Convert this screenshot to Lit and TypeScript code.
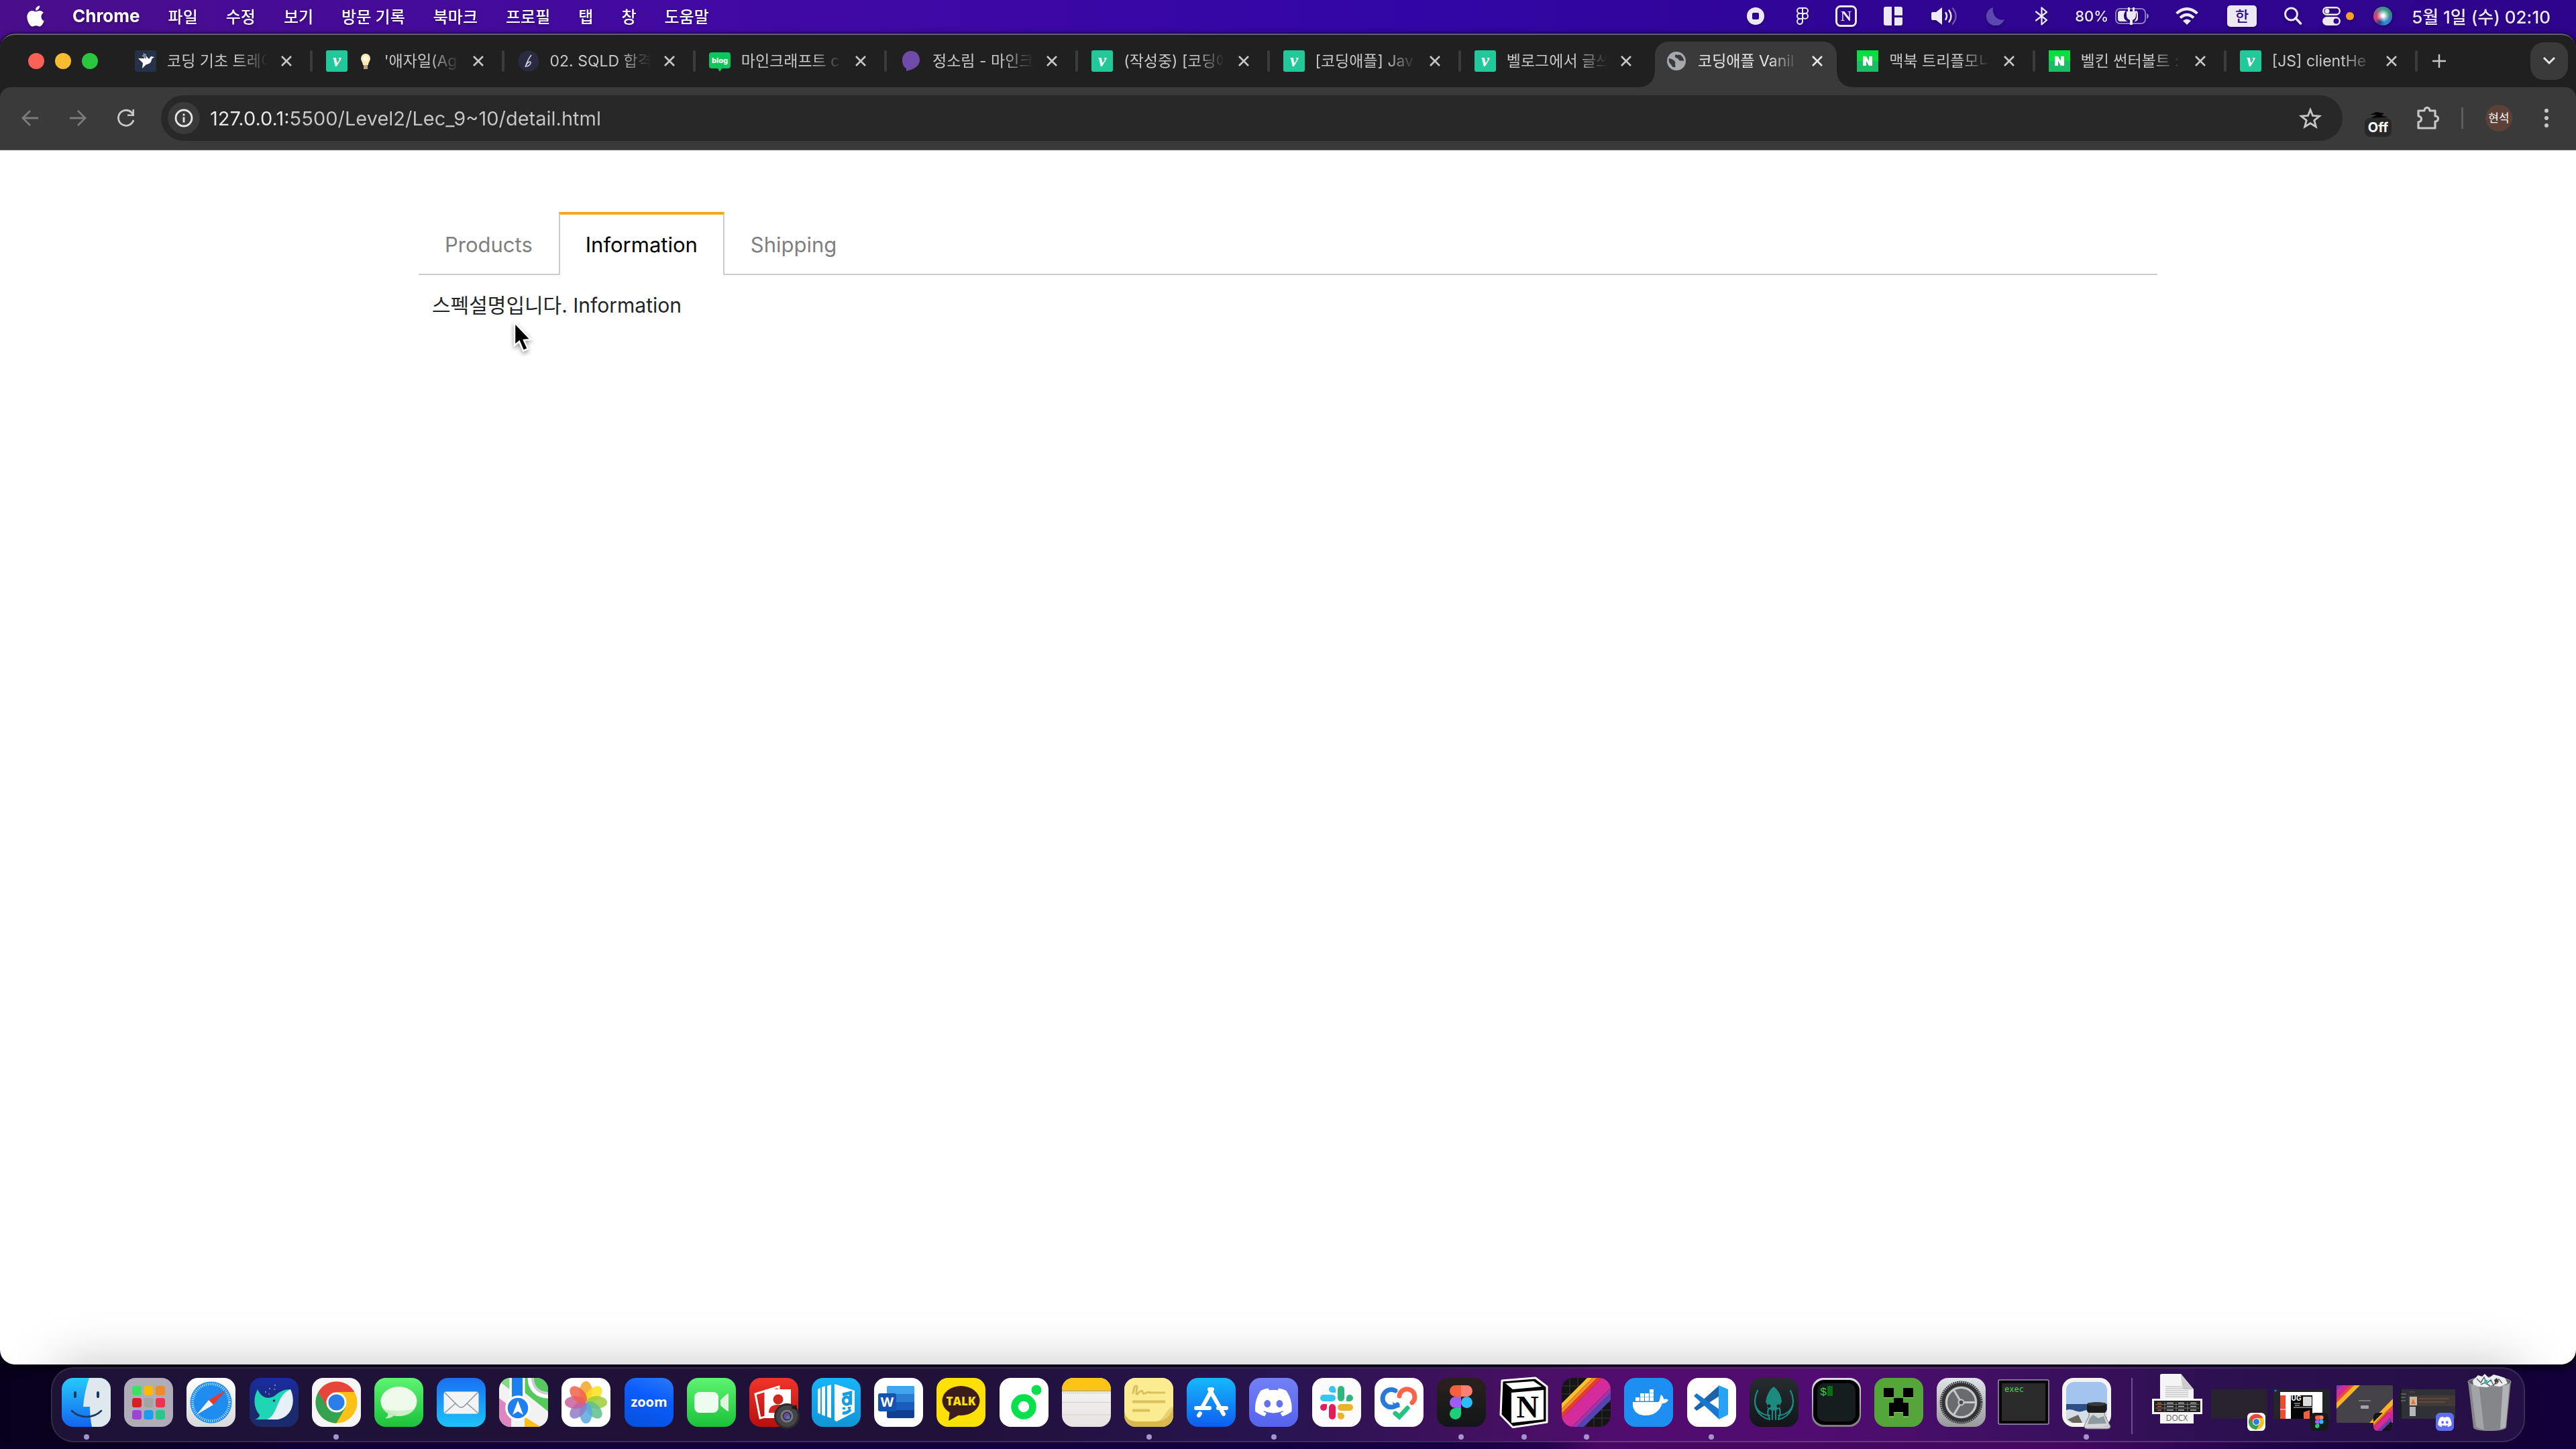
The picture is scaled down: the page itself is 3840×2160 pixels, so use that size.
import { LitElement, html, svg, css } from "lit";
import { customElement, state } from "lit/decorators.js";
import { classMap } from "lit/directives/class-map.js";

/* ---------- shared marks, all drawn on a 73 x 73 tile ---------- */

const chromeMark = svg`
  <circle cx="36.5" cy="36.5" r="31" fill="#fbc116"/>
  <path d="M36.5 36.5 9.6 21A31 31 0 0 1 63.4 21H36.5z" fill="#e8453a"/>
  <path d="M9.6 21A31 31 0 0 0 36.5 67.5L50 44 36.5 36.5 22 41z" fill="#34a350"/>
  <path d="M9.6 21 23 44 36.5 36.5V21z" fill="#e8453a"/>
  <circle cx="36.5" cy="36.5" r="15" fill="#fff"/>
  <circle cx="36.5" cy="36.5" r="12" fill="#2b7de9"/>`;

const figmaMark = svg`
  <path d="M36 11h-8.500a8.500 8.500 0 0 0 0 17H36z" fill="#f7603f"/>
  <path d="M36 11h8.500a8.500 8.500 0 0 1 0 17H36z" fill="#fb8072"/>
  <path d="M36 28h-8.500a8.500 8.500 0 0 0 0 17H36z" fill="#a25bf5"/>
  <circle cx="44.500" cy="36.500" r="8.500" fill="#2cbcfb"/>
  <path d="M36 45h-8.500a8.500 8.500 0 1 0 8.500 8.500z" fill="#1ccf76"/>`;

const discordMark = svg`
  <g transform="translate(9 9) scale(2.28)"><path fill="#fff" d="M20.317 4.3698a19.7913 19.7913 0 00-4.8851-1.5152.0741.0741 0 00-.0785.0371c-.211.3753-.4447.8648-.6083 1.2495-1.8447-.2762-3.68-.2762-5.4868 0-.1636-.3933-.4058-.8742-.6177-1.2495a.077.077 0 00-.0785-.037 19.7363 19.7363 0 00-4.8852 1.515.0699.0699 0 00-.0321.0277C.5334 9.0458-.319 13.5799.0992 18.0578a.0824.0824 0 00.0312.0561c2.0528 1.5076 4.0413 2.4228 5.9929 3.0294a.0777.0777 0 00.0842-.0276c.4616-.6304.8731-1.2952 1.226-1.9942a.076.076 0 00-.0416-.1057c-.6528-.2476-1.2743-.5495-1.8722-.8923a.077.077 0 01-.0076-.1277c.1258-.0943.2517-.1923.3718-.2914a.0743.0743 0 01.0776-.0105c3.9278 1.7933 8.18 1.7933 12.0614 0a.0739.0739 0 01.0785.0095c.1202.099.246.1981.3728.2924a.077.077 0 01-.0066.1276 12.2986 12.2986 0 01-1.873.8914.0766.0766 0 00-.0407.1067c.3604.698.7719 1.3628 1.225 1.9932a.076.076 0 00.0842.0286c1.961-.6067 3.9495-1.5219 6.0023-3.0294a.077.077 0 00.0313-.0552c.5004-5.177-.8382-9.6739-3.5485-13.6604a.061.061 0 00-.0312-.0286zM8.02 15.3312c-1.1825 0-2.1569-1.0857-2.1569-2.419 0-1.3332.9555-2.4189 2.157-2.4189 1.2108 0 2.1757 1.0952 2.1568 2.419 0 1.3332-.9555 2.4189-2.1569 2.4189zm7.9748 0c-1.1825 0-2.1569-1.0857-2.1569-2.419 0-1.3332.9554-2.4189 2.1569-2.4189 1.2108 0 2.1757 1.0952 2.1568 2.419 0 1.3332-.946 2.4189-2.1568 2.4189Z"/></g>`;

const band = (a: number, b: number, fill: string) =>
  svg`<path d="M${a} 0H${b}L0 ${b}V${a}z" fill=${fill}/>`;

const stripesMark = svg`
  <path d="M0 12h73M0 24h73M0 36h73M0 48h73M0 60h73M12 0v73M24 0v73M36 0v73M48 0v73M60 0v73" stroke="#3a3a3a"/>
  ${band(38, 46, "#fbc02c")}${band(46, 53, "#f58a2a")}${band(53, 60, "#ee3a2e")}
  ${band(60, 88, "#d42c9c")}${band(88, 96, "#9a36ac")}${band(96, 106, "#5145b5")}`;

/* ---------- dock applications ---------- */

interface DockApp {
  id: string;
  label: string;
  running?: boolean;
  art: unknown;
}

const petals = [
  [0, "#f5a623"], [45, "#f8e01c"], [90, "#9ccc3c"], [135, "#5fbf8c"],
  [180, "#5aa9e0"], [225, "#8f7cc8"], [270, "#c9609c"], [315, "#f0604c"],
] as const;

const launchColors = ["#3fdf62", "#fab70f", "#f0892a", "#d42020", "#a3a3a3", "#ee3350", "#9a45d6", "#1b9cf2", "#2cc58a"];

const apps: DockApp[] = [
  { id: "finder", label: "Finder", running: true, art: svg`
    <path d="M41 0C36 14 33 28 32 43H42C42 54 43 64 45 73H73V0z" fill="#dfe7ef"/>
    <path d="M20 22v6M54 22v6" stroke="#173a5e" stroke-width="4" stroke-linecap="round"/>
    <path d="M15 49C27 61 47 61 59 49" fill="none" stroke="#173a5e" stroke-width="2.500" stroke-linecap="round"/>` },
  { id: "launchpad", label: "Launchpad", art: launchColors.map((c, i) =>
      svg`<rect x=${12 + (i % 3) * 17.5} y=${12 + Math.floor(i / 3) * 18} width="14" height="14" rx="3.500" fill=${c}/>`) },
  { id: "safari", label: "Safari", art: svg`
    <circle cx="36.500" cy="36.500" r="31" fill="#1e8cf0"/>
    <circle cx="36.500" cy="36.500" r="27.500" fill="none" stroke="#cfe8ff" stroke-width="4" stroke-dasharray="1 1.900"/>
    <path d="M59 18 33 33 40 40z" fill="#e8392f"/><path d="M15 55 33 33 40 40z" fill="#f2f4f6"/>` },
  { id: "whale", label: "Whale", art: svg`
    <path d="M12 17C18 31 28 32 37 27 45 20 52 17 61 17C57 34 55 50 34 62H8C14 60 15 57 15 55C6 45 5 30 12 17z" fill="#1fd6b4"/>
    <path d="M61 17C69 33 65 58 42 62H26C44 54 39 26 61 17z" fill="#e6f0f7"/>
    <circle cx="36.500" cy="34" r="1.800" fill="#12304e"/>
    <g fill="#fff"><circle cx="24" cy="21" r=".8"/><circle cx="30" cy="16" r=".8"/><circle cx="38" cy="11" r=".8"/><circle cx="37" cy="17" r=".7"/><circle cx="29" cy="24" r=".7"/></g>` },
  { id: "chrome", label: "Chrome", running: true, art: chromeMark },
  { id: "messages", label: "메시지", art: svg`
    <ellipse cx="36.500" cy="35" rx="27" ry="22" fill="#eefbea"/><path d="M19 49C22 55 20 58 16 60 23 61 28 58 31 54z" fill="#c8efc4"/>
    <path d="M12 45C20 61 53 61 61 45 54 50 20 50 12 45z" fill="#bdeab8" opacity=".7"/>` },
  { id: "mail", label: "Mail", art: svg`
    <rect x="10.500" y="20.500" width="52" height="33" rx="4" fill="#f1f3f5"/>
    <path d="M12 22 32 42Q36.500 46 41 42L61 22M12 52 28 38M61 52 45 38" fill="none" stroke="#8f969e" stroke-width="1.600"/>` },
  { id: "maps", label: "지도", art: svg`
    <path d="M0 0h17v18L0 5z" fill="#7edb7e"/><path d="M38 0h35v50L38 22z" fill="#56c95c"/>
    <path d="M0 30 18 44V73H0z" fill="#dd86bf"/><path d="M38 58 62 73H38z" fill="#f8c21c"/>
    <rect x="19" y="0" width="16" height="45" fill="#1d7ff0"/><path d="M17 0v44M37 0v44" stroke="#fff" stroke-width="3"/>
    <path d="M47 0C47 16 58 26 73 26" fill="none" stroke="#fff" stroke-width="9"/><path d="M50 0C50 14 60 23 73 23" fill="none" stroke="#c9ccd1" stroke-width="4"/>
    <circle cx="28" cy="45" r="17" fill="#1d7ff0" stroke="#fff" stroke-width="3.500"/>
    <path d="M28 34 36 55 28 50 20 55z" fill="#fff"/>` },
  { id: "photos", label: "사진", art: petals.map(([a, c]) =>
      svg`<ellipse cx="36.500" cy="20.500" rx="9.500" ry="15.500" fill=${c} opacity=".85" transform="rotate(${a} 36.5 36.5)"/>`) },
  { id: "zoom", label: "Zoom", art: svg`<text x="36.500" y="42.500" class="zoomtext">zoom</text>` },
  { id: "facetime", label: "FaceTime", art: svg`
    <rect x="11" y="21" width="36" height="31" rx="8" fill="#eefbef"/><path d="M50 33Q60 23 62 23V50Q60 50 50 41z" fill="#dff5e0"/>` },
  { id: "photobooth", label: "Photo Booth", art: svg`
    <path d="M9 24 44 13V20H24V58L16 60z" fill="none" stroke="#fff" stroke-width="3"/>
    <rect x="24" y="17" width="38" height="43" fill="#fff"/>
    <circle cx="43" cy="32" r="7.500" fill="#d62420"/><path d="M29 52C29 42 36 40 43 40S57 42 57 52z" fill="#d62420"/>
    <circle cx="56" cy="57" r="19" fill="#2b2b2d"/><circle cx="56" cy="57" r="16" fill="#454548"/><circle cx="56" cy="57" r="8" fill="#2a2a36" stroke="#77777d" stroke-width="3"/>
    <circle cx="56" cy="57" r="5" fill="#6a4b9e"/><circle cx="58" cy="59" r="2.500" fill="#3a86b0"/><path d="M62 45 70 40 71 48z" fill="#1a1a1a"/>` },
  { id: "bandi", label: "반디집", art: svg`
    <g fill="#fff"><path d="M9 17l4-2v39l-4-2zM15 14l5-2v45l-5-2zM23 12l6-2v50l-6-2zM34 9l30 10v32L37 65 34 63z"/></g>
    <g fill="none" stroke="#149fe2" stroke-width="4.500"><ellipse cx="52" cy="34" rx="5" ry="5.500"/><path d="M46 25 58 22V40M48 44v3M56 43v3M46 52Q52 54 58 47"/></g>` },
  { id: "word", label: "Word", art: svg`
    <rect x="19" y="12" width="41" height="48" rx="3" fill="#1a5cbe"/><path d="M19 24V15q0-3 3-3H57q3 0 3 3v9z" fill="#41a5ee"/>
    <rect x="19" y="24" width="41" height="12" fill="#2b7cd3"/><path d="M19 48h41v9q0 3-3 3H22q-3 0-3-3z" fill="#103f91"/>
    <rect x="6" y="23" width="27" height="27" rx="3" fill="#1553b0"/><text x="19.500" y="43" class="wordtext">W</text>` },
  { id: "talk", label: "카카오톡", art: svg`
    <ellipse cx="36.500" cy="34" rx="28" ry="22" fill="#3b1d1c"/><path d="M20 48 18 64 36 54z" fill="#3b1d1c"/>
    <text x="36.500" y="41" class="talktext">TALK</text>` },
  { id: "cookie", label: "Cookie", art: svg`
    <circle cx="36" cy="43" r="13.500" fill="none" stroke="#06e04a" stroke-width="10.500"/><circle cx="55" cy="18" r="7.500" fill="#06e04a"/>` },
  { id: "notes", label: "메모", art: svg`
    <rect width="73" height="19" fill="#fbc417"/><path d="M0 19.500h73" stroke="#b8a878" stroke-width="1.500"/><path d="M2 22.500h70" stroke="#bbb" stroke-width="1.500" stroke-dasharray="1.500 1.500"/>
    <path d="M0 36.500h73M0 55h73" stroke="#cfcdcb" stroke-width="1.200"/>` },
  { id: "stickies", label: "스티커", running: true, art: svg`
    <path d="M0 50C10 70 60 70 73 44V73H0z" fill="#d9b94c"/><path d="M0 0H73V42C68 58 58 65 44 65H20C8 65 2 60 0 50z" fill="#fbec92"/>
    <path d="M46 65C62 62 58 50 73 42 70 58 60 65 46 65z" fill="#e8d170"/>
    <path d="M13 24C14 14 16 10 19 13 18 20 17 26 20 24 24 18 27 18 28 23 32 25 34 19 38 22H61" fill="none" stroke="#dcc05c" stroke-width="3"/>
    <path d="M12 35.500h49M12 48.500h26" stroke="#dcc05c" stroke-width="4"/>` },
  { id: "appstore", label: "App Store", art: svg`
    <g stroke="#fff" stroke-width="6" stroke-linecap="round"><path d="M38 17 23 44M34 17 55 54M14 45H34M47 45h12M20 53l-2 3"/></g>` },
  { id: "discord", label: "Discord", running: true, art: discordMark },
  { id: "slack", label: "Slack", art: svg`
    <g stroke-width="10" stroke-linecap="round"><path d="M17 30H30" stroke="#36c5f0"/><path d="M43 17V30" stroke="#2eb67d"/><path d="M43 44H56" stroke="#ecb22e"/><path d="M30 44V57" stroke="#e01e5a"/></g>
    <path d="M35 22V17a5 5 0 1 0-5 5z" fill="#36c5f0"/><path d="M51 35h5a5 5 0 1 0-5-5z" fill="#2eb67d"/><path d="M38 52v5a5 5 0 1 0 5-5z" fill="#ecb22e"/><path d="M22 39h-5a5 5 0 1 0 5 5z" fill="#e01e5a"/>` },
  { id: "check", label: "Checker", art: svg`
    <path d="M31 19A13 13 0 1 0 34 40" fill="none" stroke="#2a78d8" stroke-width="7" stroke-linecap="round"/><path d="M27 36 39 43 29 46z" fill="#2a78d8"/>
    <path d="M37 27A11.500 11.500 0 1 1 56 37" fill="none" stroke="#f9644b" stroke-width="7" stroke-linecap="round"/>
    <path d="M31 53 37 58 49 45" fill="none" stroke="#26c281" stroke-width="7" stroke-linecap="round"/>` },
  { id: "figma", label: "Figma", running: true, art: figmaMark },
  { id: "notion", label: "Notion", running: true, art: svg`
    <path d="M4 4 54 0 71 13V66L20 73.500 2 55Z" fill="#000" stroke="#fff" stroke-width="3" stroke-linejoin="round"/>
    <path d="M9 8 51 5 63 13 20 17z" fill="#fff"/><path d="M18 22 66 18V62L18 67z" fill="#fff"/>
    <text x="42" y="59" class="notiontext">N</text>` },
  { id: "stripes", label: "Clip", running: true, art: stripesMark },
  { id: "docker", label: "Docker", art: svg`
    <path d="M13 36H51C54 34 53 29 55 25 58 27 59 30 59 32 62 31 65 32 66 33 64 37 60 38 57 38 52 52 42 56 32 56 18 56 12 47 13 36z" fill="#fff"/>
    <g fill="#fff"><rect x="17" y="29" width="6" height="5.500"/><rect x="24" y="29" width="6" height="5.500"/><rect x="31" y="29" width="6" height="5.500"/><rect x="38" y="29" width="6" height="5.500"/><rect x="24" y="23" width="6" height="5.500"/><rect x="31" y="23" width="6" height="5.500"/><rect x="38" y="23" width="6" height="5.500"/><rect x="38" y="17" width="6" height="5.500"/></g>` },
  { id: "vscode", label: "Visual Studio Code", running: true, art: svg`
    <path d="M48 11 10 45 14 49 48 27z" fill="#1e62a8"/><path d="M48 62 10 27 14 23 48 47z" fill="#1877cf"/>
    <path d="M47 11 61 17V55L47 62z" fill="#28a3f3"/>` },
  { id: "kraken", label: "GitKraken", art: svg`
    <path d="M36 13C43 18 48 28 48 36 46 38 45 41 46 44 41 50 31 50 26 44 27 41 26 38 24 36 25 28 29 18 36 13z" fill="#1d8a80"/>
    <g fill="none" stroke="#1d8a80" stroke-width="2.200" stroke-linecap="round"><path d="M12 19C2 40 12 58 30 62M61 19C71 40 61 58 43 62M9 28C5 44 15 55 30 56M64 28C68 44 58 55 43 56M34 46V62M39 46V62M28 46Q26 56 30 60M45 46Q47 56 43 60"/></g>
    <g fill="#12201f"><circle cx="29" cy="42" r="2.500"/><circle cx="43" cy="42" r="2.500"/></g>` },
  { id: "iterm", label: "iTerm", art: svg`
    <rect x="2" y="3" width="69" height="67" rx="16" fill="#000"/><rect x="8" y="8" width="57" height="57" rx="10" fill="#161d1f"/>
    <text x="12" y="26" class="termtext">$</text><rect x="23" y="12" width="8" height="15" fill="#0b6e14"/>` },
  { id: "creeper", label: "Minecraft", art: svg`
    <path d="M14 15H29V29H14zM43 15H58V29H43zM29 30H43V37H51V57H43V51H29V57H22V37H29z" fill="#000"/>
    <path d="M14 29.500H29M43 29.500H58M22 58h7M43 58h8M29 51.500h14" stroke="#9fdc80" stroke-width="1.200"/>` },
  { id: "settings", label: "시스템 설정", art: svg`
    <circle cx="36.500" cy="36.500" r="30" fill="none" stroke="#3c3d40" stroke-width="4" stroke-dasharray="2 1"/>
    <circle cx="36.500" cy="36.500" r="26.500" fill="#85878a" stroke="#333" stroke-width="5"/>
    <circle cx="36.500" cy="36.500" r="22" fill="#6a6b6e" stroke="#c8c9cc" stroke-width="3"/>
    <path d="M36.500 36.500H58M36.500 36.500 25.500 18M36.500 36.500 25.500 55" stroke="#c8c9cc" stroke-width="3"/>
    <circle cx="36.500" cy="36.500" r="4" fill="#4a4b4e" stroke="#c8c9cc" stroke-width="2"/>` },
  { id: "exec", label: "exec", art: svg`
    <rect x="-1" y="3" width="75" height="66" rx="2" fill="#070707" stroke="#9a96a8" stroke-width="1.500"/><rect x="4" y="8" width="65" height="56" fill="#2b2b2b"/>
    <text x="8" y="21" class="exectext">exec</text>` },
  { id: "preview", label: "미리보기", running: true, art: svg`
    <rect width="73" height="73" rx="17" fill="#f4f3f2"/><rect x="6" y="6" width="61" height="61" rx="12" fill="#a3c4ee"/>
    <path d="M6 39H67V55Q67 67 55 67H18Q6 67 6 55z" fill="#2d4f86"/><path d="M6 48C16 44 22 54 32 49 42 46 50 52 67 48V58L58 67H18Q6 67 6 57z" fill="#d4dee8"/>
    <path d="M8 62 24 55 30 67H16z" fill="#6b6558"/>
    <path d="M40 47H63V55L72 72Q72 76 67 76H38Q32 76 33 71L40 57z" fill="#d4d6d6" opacity=".95" stroke="#777" stroke-width="1"/>
    <path d="M41 60 46 55 54 60 62 57 66 68 38 69z" fill="#8e9a9e"/><rect x="37" y="37" width="29" height="15" rx="4" fill="#1b1b1d"/><ellipse cx="51.500" cy="39" rx="14" ry="3" fill="#3a3a3c"/>` },
];

/* ---------- documents, minimised windows and trash ---------- */

const badge = (x: number, fill: string, mark: unknown) => svg`
  <svg x=${x} y="58" width="27" height="27" viewBox="0 0 73 73"><rect width="73" height="73" rx="17" fill=${fill}/>${mark}</svg>`;

/* the striped mark bleeds off its tile, so its corners are cut back to the tile's shape */
const stripesBadge = svg`
  <clipPath id="tile-corners"><rect width="73" height="73" rx="17"/></clipPath>
  <g clip-path="url(#tile-corners)">${stripesMark}</g>`;

const minis = [
  { label: "문서.docx", art: svg`
    <path d="M21 2Q21 0 24 0H52L71 23V74H21z" fill="#f4f4f4"/><path d="M52 0 71 23Q58 24 54 21 53 12 52 0z" fill="#cdcdcd"/>
    <path d="M29 19h24M29 22h34M29 25h34M29 28h34M29 31h34M29 34h34" stroke="#b3b3b3" stroke-width="1"/>
    <rect x="9" y="37" width="75" height="23" fill="#f6f6f6"/><rect x="12" y="40" width="69" height="17" fill="#222"/>
    <path d="M14 45.500h65M14 51h65M28 42v14M45 42v14M62 42v14" stroke="#999" stroke-width=".7"/><path d="M17 43.500h6M17 48.500h6M17 54h6" stroke="#d0603c" stroke-width="1.500"/>
    <path d="M31 43.500h10M48 43.500h9M66 43.500h9M31 48.500h10M48 48.500h9M66 48.500h9M31 54h10M48 54h9M66 54h9" stroke="#bbb" stroke-width="1.500"/>
    <text x="46" y="70" class="docxtext">DOCX</text>` },
  { label: "Chrome 윈도우", art: svg`<rect x="4" y="23" width="84" height="44" fill="#28232f"/>${badge(58, "#fafafa", chromeMark)}` },
  { label: "Figma 윈도우", art: svg`
    <rect x="4" y="23" width="84" height="44" fill="#242528"/><rect x="14" y="27" width="63" height="40" fill="#fff"/>
    <path d="M14 32h8v35h-8z" fill="#f04a31"/><path d="M14 53h8" stroke="#fff"/><rect x="30" y="32" width="32" height="35" fill="#050505"/><rect x="48" y="34" width="13" height="14" rx="1" fill="#dcdcdc"/>
    <text x="38" y="40" class="ugtext">UG</text><path d="M35 44h9M36 47h7M34 50h28" stroke="#ddd"/><path d="M49 57l9-3v13h-9z" fill="#f0603c"/><circle cx="7" cy="25" r="1.500" fill="#2b83f0"/>
    ${badge(59, "#17191b", figmaMark)}` },
  { label: "Clip 윈도우", art: svg`
    <svg x="5" y="17" width="84" height="56" viewBox="0 0 84 56"><rect width="84" height="56" rx="2" fill="#46424a"/>
      <path d="M6 0H20L0 20V8z" fill="#d42c9c"/><path d="M0 0H8L0 8z" fill="#7b3cb4"/><path d="M20 0h6L0 26v-6z" fill="#ee4a3a"/><path d="M26 0h9L0 35v-9z" fill="#f9b42c"/>
      <path d="M84 20v10L56 56H49z" fill="#f9b42c"/><path d="M84 30v6L62 56h-6z" fill="#ee4a3a"/><path d="M84 36v20H62z" fill="#d42c9c"/>
      <path d="M33 23h18" stroke="#aaa"/><rect x="36" y="30" width="12" height="5" rx="1" fill="#a5a2a8"/></svg>
    ${badge(60, "#111", stripesBadge)}` },
  { label: "Discord 윈도우", art: svg`
    <rect x="5" y="23" width="84" height="44" fill="#2f3136"/><path d="M5 23h4v44H5z" fill="#1c1d20"/><rect x="19" y="32" width="70" height="16" fill="#443a35"/>
    <rect x="21" y="34" width="11" height="13" fill="#c9b8a4"/><path d="M23 45l3-8 4 8z" fill="#e87428"/><rect x="21" y="49" width="9" height="14" fill="#b5b5b5"/>
    <path d="M21 27h8M34 37h46M34 42h40" stroke="#7d5a48"/><path d="M8 30h8M8 35h7M8 40h7" stroke="#888"/>
    ${badge(60, "#5f6df2", discordMark)}` },
  { label: "휴지통", art: svg`
    <path d="M14 11 22 80Q24 85 46 85 68 85 71 80L78 11z" fill="#85868a"/><path d="M18 14 26 78Q30 82 38 83L30 14z" fill="#a3a4a8"/><path d="M66 14 62 82Q68 81 70 79L76 14z" fill="#b2b3b7"/>
    <ellipse cx="46" cy="12" rx="32" ry="7" fill="#606166" stroke="#aaabaf"/>
    <path d="M21 10 29 2 35 4 39 0 45 6 52 1 60 3 69 6 73 14 62 19 50 17 42 20 30 19 22 16z" fill="#eceef0"/>
    <path d="M27 7l6 6 5-8 4 9 6-5 4 8 8-9 5 6M33 16l6-3 8 5" fill="none" stroke="#5f6468" stroke-width="1.500"/><path d="M38 10l5-1 1 5-5 1z" fill="#30bfa8"/><path d="M53 9l4-3 3 6-5 4z" fill="#3d4248"/><path d="M55 12l4 1-2 3z" fill="#e0643c"/>` },
];

/* ---------- browser tabs ---------- */

const velog = html`<svg class="fav" viewBox="0 0 32 32"><rect width="32" height="32" rx="3" fill="#20c997"/><text x="16" y="24" class="velogtext">v</text></svg>`;
const naver = html`<svg class="fav" viewBox="0 0 32 32"><rect width="32" height="16" fill="#04e03f"/><rect y="16" width="32" height="16" fill="#18bd66"/><path d="M9 9h5l4 7V9h5v14h-5l-4-7v7H9z" fill="#fff"/></svg>`;
const bulb = html`<svg class="bulb" viewBox="0 0 32 28"><path d="M11 1a7 7 0 0 1 7 7c0 4-3 6-3 10H7C7 14 4 12 4 8a7 7 0 0 1 7-7z" fill="#ffe9b0"/><circle cx="11" cy="8" r="4" fill="#fffbe8"/><path d="M8 18h6v6H8z" fill="#b9a27e"/></svg>`;

const browserTabs: { title: unknown; name: string; icon: unknown }[] = [
  { name: "코딩 기초 트레", title: "코딩 기초 트레이", icon: html`<svg class="fav" viewBox="0 0 32 32"><rect width="32" height="32" rx="4" fill="#263247"/><path d="M5 12 14 12 13 4 21 13 24 9 29 10 25 13C25 19 20 21 17 21L11 27 12 19z" fill="#fff"/><path d="M10 8 17 13V5z" fill="#7b8798"/></svg>` },
  { name: "애자일", title: html`${bulb} '애자일(Ag`, icon: velog },
  { name: "02. SQLD", title: "02. SQLD 합격", icon: html`<svg class="fav" viewBox="0 0 32 32"><circle cx="16" cy="16" r="15.500" fill="#2a2a40"/><path d="M20 7C16 12 13 19 11 25M12 23C14 17 20 15 19 19 18 22 14 25 12 23" fill="none" stroke="#d5d6e0" stroke-width="1.500"/></svg>` },
  { name: "마인크래프트", title: "마인크래프트 c", icon: html`<svg class="fav" viewBox="0 0 32 32"><path d="M4 3H28Q32 3 32 7V23Q32 27 28 27H19L16 32 13 27H4Q0 27 0 23V7Q0 3 4 3z" fill="#09c75a"/><text x="16" y="19" class="blogtext">blog</text></svg>` },
  { name: "정소림", title: "정소림 - 마인크", icon: html`<svg class="fav" viewBox="0 0 32 32"><path d="M16 1C24 1 29 7 29 15 29 22 22 27 16 29L9 31V27C5 25 3 20 3 15 3 7 8 1 16 1z" fill="#6f4ba8"/></svg>` },
  { name: "작성중", title: "(작성중) [코딩애", icon: velog },
  { name: "코딩애플 Jav", title: "[코딩애플] Jav", icon: velog },
  { name: "벨로그에서", title: "벨로그에서 글쓰", icon: velog },
  { name: "코딩애플 Vanil", title: "코딩애플 Vanil", icon: html`<svg class="fav" viewBox="0 0 32 32"><circle cx="16" cy="16" r="14" fill="#a5a8ad"/><path d="M5 12C9 13 12 14 14 17 15 20 13 21 15 24 12 27 9 24 8 21 5 19 4 15 5 12zM15 6C18 8 20 6 22 7 26 10 27 13 27 16 24 15 22 16 20 15 19 12 17 12 15 11 13 9 14 7 15 6z" fill="#3a3a3a"/></svg>` },
  { name: "맥북", title: "맥북 트리플모니", icon: naver },
  { name: "벨킨", title: "벨킨 썬터볼트 :", icon: naver },
  { name: "clientHe", title: "[JS] clientHe", icon: velog },
];

const closeIcon = html`<svg width="16" height="16" viewBox="0 0 16 16"><path d="M1 1 15 15M15 1 1 15" stroke="currentColor" stroke-width="2.600"/></svg>`;

const panels = [
  { name: "Products", body: "상품설명입니다. Product" },
  { name: "Information", body: "스펙설명입니다. Information" },
  { name: "Shipping", body: "배송정보입니다. Shipping" },
];

@customElement("app-root")
export class AppRoot extends LitElement {
  @state() private panel = 1;
  @state() private activeTab = 8;

  static styles = css`
    :host {
      display: block;
      font-family: Inter, "Noto Sans CJK KR", sans-serif;
      color: #fff;
    }
    * { box-sizing: border-box; }
    button, input { font: inherit; color: inherit; background: none; border: 0; padding: 0; margin: 0; }
    svg { display: block; flex: none; }
    svg text { text-anchor: middle; }

    .desktop {
      display: flex;
      flex-direction: column;
      min-height: 100vh;
      padding-bottom: 10px;
      background:
        linear-gradient(90deg, #4a0e8c, #4209a4 28%, #3206a6 55%, #300592 75%, #2f048c) top / 100% 72px no-repeat,
        linear-gradient(90deg, #08001c, #13003a 12%, #19004a 56%, #2a0356 60%, #520a70 62%, #4c0a6c 80%, #260552 88%, #170040 94%, #12003a);
    }

    /* menu bar */
    .menubar { display: flex; align-items: center; height: 50px; padding: 0 38px 3px 40px; font-size: 24px; font-weight: 500; }
    .menus { display: flex; align-items: center; gap: 42px; }
    .menus button, .status { filter: drop-shadow(0 2px 2px rgba(0, 0, 0, .3)); }
    .menus .app { font-size: 26px; font-weight: 700; }
    .status { display: flex; align-items: center; gap: 40px; margin-left: auto; color: #ece8f6; }
    .group { display: flex; align-items: center; gap: 29px; }
    .clock { font-size: 26px; white-space: nowrap; }
    .battery { display: flex; align-items: center; gap: 10px; font-size: 22px; }
    .ime { width: 44px; height: 32px; border-radius: 5px; background: #ece8f6; color: #2f0590; font-size: 22px; line-height: 32px; text-align: center; }
    .siri {
      width: 28px;
      height: 28px;
      border-radius: 50%;
      background:
        radial-gradient(circle at 52% 48%, #fff 8%, rgba(255, 255, 255, .55) 24%, transparent 48%),
        conic-gradient(#3c9a86, #2f8f7a 20%, #3a78c0 30%, #2b8fd0 45%, #2c3f8c 58%, #d8406c 68%, #c04a70 78%, #6d7a88 90%, #3c9a86);
    }

    /* browser window */
    .window {
      flex: 1;
      display: flex;
      flex-direction: column;
      margin-bottom: 4px;
      border-top: 2px solid #67646f;
      border-radius: 22px;
      overflow: hidden;
      background: #202020;
      box-shadow: 0 0 0 1px #08041a, 0 4px 12px #000;
    }
    .strip { display: flex; align-items: center; height: 78px; padding: 0 12px 0 42px; }
    .lights { display: flex; gap: 16px; margin-right: 24px; }
    .lights button { width: 24px; height: 24px; border-radius: 50%; }
    .lights .red { background: #fb6055; }
    .lights .yellow { background: #f8bc30; }
    .lights .green { background: #29c640; }
    .tabs { flex: 1; min-width: 0; display: flex; align-self: stretch; padding-left: 9px; }
    .tab { position: relative; flex: 1 1 0; min-width: 0; display: flex; align-items: center; padding: 0 29px 0 22px; color: #c7c7c7; }
    .tab::after { content: ""; position: absolute; right: -2px; top: 23px; width: 4px; height: 32px; border-radius: 2px; background: #3c3c3c; }
    .tab.active { color: #e6e6e6; }
    .tab.active::after, .tab.before::after { display: none; }
    .cap { position: absolute; inset: 10px 8px 0 6px; border-radius: 20px 20px 0 0; background: #3a3a3a; }
    .cap::before, .cap::after { content: ""; position: absolute; bottom: 0; width: 22px; height: 22px; }
    .cap::before { right: 100%; background: radial-gradient(circle at 0 0, transparent 21px, #3a3a3a 22px); }
    .cap::after { left: 100%; background: radial-gradient(circle at 100% 0, transparent 21px, #3a3a3a 22px); }
    .tab > button, .tab > .fav { position: relative; }
    .fav { width: 32px; height: 32px; margin-right: 16px; }
    .title {
      flex: 1;
      min-width: 0;
      overflow: hidden;
      white-space: nowrap;
      text-align: left;
      font-size: 23px;
      line-height: 36px;
      -webkit-mask-image: linear-gradient(90deg, #000 calc(100% - 44px), transparent);
      mask-image: linear-gradient(90deg, #000 calc(100% - 44px), transparent);
    }
    .bulb { display: inline-block; width: 32px; height: 28px; vertical-align: middle; }
    .close { margin-left: 20px; }
    .strip-end { flex: none; display: flex; align-items: center; justify-content: space-between; width: 226px; padding-left: 23px; color: #c7c7c7; }
    .more { display: grid; place-items: center; width: 56px; height: 56px; border-radius: 20px; background: #3a3a3a; }

    .toolbar {
      display: flex;
      align-items: center;
      height: 94px;
      padding: 0 40px 0 32px;
      border-bottom: 2px solid #474747;
      border-radius: 16px 16px 0 0;
      background: #3a3a3a;
      color: #c7c7c7;
    }
    .nav { display: flex; align-items: center; gap: 45px; margin-right: 38px; }
    .nav .off { color: #7b7b7b; }
    .omnibox { flex: 1; display: flex; align-items: center; height: 68px; padding: 0 31px 0 10px; border-radius: 34px; background: #282828; }
    .info { display: grid; place-items: center; width: 48px; height: 48px; border-radius: 50%; background: #3a3a3a; color: #e6e6e6; }
    .url {
      flex: 1;
      min-width: 0;
      height: 48px;
      margin-left: 15px;
      font-size: 29px;
      color: transparent;
      background: linear-gradient(90deg, #eaeaea 122px, #c7c7c7 122px);
      -webkit-background-clip: text;
      background-clip: text;
      outline: none;
    }
    .ext { display: flex; align-items: center; margin-left: 33px; }
    .offext { display: grid; justify-items: center; margin-right: 37px; padding-top: 18px; }
    .offtag { width: 40px; height: 28px; border-radius: 8px; background: #282828; color: #fff; font-size: 20px; font-weight: 700; line-height: 28px; text-align: center; }
    .rule { width: 3px; height: 32px; margin: 0 33px; background: #5e5e5e; }
    .avatar { width: 40px; height: 40px; margin-right: 47px; border-radius: 50%; background: #5d4037; color: #fff; font-size: 17px; line-height: 40px; text-align: center; white-space: nowrap; }

    /* page */
    .page { flex: 1; background: #fff; color: #212529; font-size: 30px; line-height: 48px; }
    .container { width: 67.5%; margin: 0 auto; padding-top: 92px; }
    .pagetabs { display: flex; border-bottom: 2px solid #ccc; font-size: 31px; }
    .pagetabs button { margin-bottom: -2px; padding: 21px 39px; border-top: 4px solid transparent; color: #808080; cursor: pointer; }
    .pagetabs .on { padding: 21px 38px; border: 2px solid #ccc; border-top: 4px solid #f5a81c; border-bottom: 0; background: #fff; color: #000; }
    .panel { margin: 0; padding: 21px 20px; }
    .pointer { position: absolute; left: 765px; top: 478px; filter: drop-shadow(0 3px 3px rgba(0, 0, 0, .4)); }

    /* dock */
    .dock {
      position: relative;
      display: flex;
      margin: 0 76px;
      padding: 14px 4px 0;
      height: 112px;
      border: 2px solid rgba(255, 255, 255, .17);
      border-radius: 34px;
      background: linear-gradient(90deg, #1f1238, #1f1138 35%, #281450 50%, #43105f 58%, #520c70 64%, #500c70 72%, #3c1060 80%, #2c1050 88%, #241044);
      background-clip: padding-box;
      box-shadow: 0 0 80px rgba(0, 0, 0, .26);
    }
    .item { flex: 1 1 0; min-width: 0; display: flex; flex-direction: column; align-items: center; gap: 11px; }
    .tile { width: 73px; height: 73px; border-radius: 17px; overflow: hidden; }
    .tile > svg { width: 73px; height: 73px; overflow: visible; }
    .dot { width: 8px; height: 8px; border-radius: 50%; background: #a891cf; }
    .mini > svg { width: 93px; height: 85px; margin-top: -6px; }
    .divider { flex: none; width: 42px; display: flex; justify-content: center; }
    .divider::before { content: ""; width: 2px; height: 84px; background: #6f4b90; }

    .finder { background: linear-gradient(#25cbfc, #1464f0); }
    .launchpad { background: #b1adb8; }
    .safari { background: linear-gradient(#fff, #d8d8d8); }
    .whale { background: linear-gradient(#1a2ba4, #1b2a6c 60%); }
    .chrome { background: #f7f6f6; }
    .messages, .facetime { background: linear-gradient(#5df472, #1cc23a); }
    .mail { background: linear-gradient(#1a6ff0, #1cc4fb); }
    .maps { background: #f2f2f2; }
    .photos, .word, .cookie, .check, .vscode { background: #fff; }
    .zoom { background: linear-gradient(200deg, #2a7af5, #0b5cff 40%, #0650d8); }
    .photobooth { background: linear-gradient(#f03429, #b90f0f); overflow: visible; }
    .bandi { background: linear-gradient(#15b4fa, #1196d6); }
    .talk { background: #fde005; }
    .notes { background: linear-gradient(#f8f8f8, #e6e2e0); }
    .stickies { background: #fbec92; }
    .appstore { background: linear-gradient(#16b8fb, #0d5df0); }
    .discord { background: linear-gradient(#7280f6, #5563ee); }
    .slack { background: #fcfbfc; }
    .figma { background: linear-gradient(#2a211e, #121618); }
    .notion, .exec, .preview { overflow: visible; }
    .stripes { background: #151515; }
    .docker { background: #1d8ff2; }
    .kraken { background: linear-gradient(#262c30, #10161a); }
    .iterm { background: linear-gradient(#dcdce4, #7d7d80); }
    .creeper { background: #55a638; }
    .settings { background: linear-gradient(#dfe3e8, #98999c); }

    .zoomtext { font: 700 20px "Open Sans", sans-serif; fill: #fff; }
    .wordtext { font: 700 20px "Open Sans", sans-serif; fill: #fff; }
    .talktext { font: 800 17px "Open Sans", sans-serif; fill: #fde005; }
    .notiontext { font: 700 46px "Liberation Serif", serif; fill: #000; }
    svg .termtext { font: 17px "Liberation Mono", monospace; fill: #38d048; text-anchor: start; }
    svg .exectext { font: 12px "DejaVu Sans Mono", monospace; fill: #43d65c; text-anchor: start; }
    .docxtext { font: 12px "Open Sans", sans-serif; fill: #666; }
    .ugtext { font: 700 10px Inter, sans-serif; fill: #fff; }
    .velogtext { font: italic 700 27px "Liberation Serif", serif; fill: #fff; }
    .blogtext { font: 800 11px Inter, sans-serif; fill: #fff; }
    .nicon { font: 700 22px "Liberation Serif", serif; fill: #ece8f6; }
  `;

  private renderMenuBar() {
    const menus = ["파일", "수정", "보기", "방문 기록", "북마크", "프로필", "탭", "창", "도움말"];
    return html`
      <header class="menubar">
        <nav class="menus" aria-label="메뉴 막대">
          <button aria-label="Apple"><svg width="26" height="32" viewBox="2 0 20 24"><path fill="#fff" d="M12.152 6.896c-.948 0-2.415-1.078-3.96-1.04-2.04.027-3.91 1.183-4.961 3.014-2.117 3.675-.546 9.103 1.519 12.09 1.013 1.454 2.208 3.09 3.792 3.039 1.52-.065 2.09-.987 3.935-.987 1.831 0 2.35.987 3.96.948 1.637-.026 2.676-1.48 3.676-2.948 1.156-1.688 1.636-3.325 1.662-3.415-.039-.013-3.182-1.221-3.22-4.857-.026-3.04 2.48-4.494 2.597-4.559-1.429-2.09-3.623-2.324-4.39-2.376-2-.156-3.675 1.09-4.61 1.09zM15.53 3.83c.843-1.012 1.4-2.427 1.245-3.83-1.207.052-2.662.805-3.532 1.818-.78.896-1.454 2.338-1.273 3.714 1.338.104 2.715-.688 3.559-1.701"/></svg></button>
          <button class="app">Chrome</button>
          ${menus.map((m) => html`<button>${m}</button>`)}
        </nav>
        <div class="status">
          <svg width="26" height="26" viewBox="0 0 26 26"><path fill="currentColor" fill-rule="evenodd" d="M13 0a13 13 0 1 1 0 26 13 13 0 0 1 0-26zM10 8q-2 0-2 2v6q0 2 2 2h6q2 0 2-2v-6q0-2-2-2z"/></svg>
          <svg width="26" height="26" viewBox="0 0 26 26"><g fill="none" stroke="currentColor" stroke-width="2"><path d="M17 1h-4a4 4 0 0 0 0 8h8a4 4 0 0 0 0-8h-4v20.500a4 4 0 1 1-4-4.500h4M17 9h-4a4 4 0 0 0 0 8h4"/><circle cx="21" cy="13" r="4"/></g></svg>
          <svg width="32" height="32" viewBox="0 0 32 32"><rect x="1.500" y="1.500" width="29" height="29" rx="6" fill="none" stroke="currentColor" stroke-width="3"/><text x="16" y="23" class="nicon">N</text></svg>
          <svg width="28" height="28" viewBox="0 0 28 28"><g fill="currentColor"><path d="M3 0h9v28H3q-3 0-3-3V3q0-3 3-3zM16 0h9q3 0 3 3v10H16zM16 16h12v9q0 3-3 3h-9z"/></g></svg>
          <svg width="44" height="28" viewBox="0 0 44 28"><path d="M3 10q0-2 2-2h5l9-7v26l-9-7H5q-2 0-2-2z" fill="currentColor"/><g fill="none" stroke="currentColor" stroke-width="2.500" stroke-linecap="round"><path d="M24.500 9q3 5 0 10M29.500 5.500q6 8.500 0 17"/><path d="M35 2.500q9 11.500 0 23" opacity=".35"/></g></svg>
          <svg width="34" height="28" viewBox="0 0 34 28"><path d="M11 1A14 14 0 1 0 28 19C18 22 9 13 11 1z" fill="#5a48b0"/></svg>
          <svg width="19" height="28" viewBox="0 0 19 28"><path d="M1 7.500 17 20 9.500 26.500V1.500L17 8 1 20.500" fill="none" stroke="currentColor" stroke-width="2.300" stroke-linejoin="round" stroke-linecap="round"/></svg>
          <div class="battery"><span>80%</span>
            <svg width="50" height="26" viewBox="0 0 50 26"><rect x="1" y="2" width="44" height="22" rx="6" fill="none" stroke="#8d7cc8" stroke-width="2"/><path d="M47 9q3 1 3 4t-3 4z" fill="#8d7cc8"/><path d="M8 5h8q-3 3-3 8 0 6 6 8H8q-4 0-4-4V9q0-4 4-4zM30 5q4 0 4 4v8q0 4-6 4 4-3 4-8 0-5-2-8z" fill="currentColor"/><path d="M19 0h3v6h4V0h3v6h2v6q0 5-5 7v7h-4v-7q-5-2-5-7V6h2z" fill="currentColor"/></svg>
          </div>
          <svg width="37" height="26" viewBox="0 0 37 26"><g fill="none" stroke="currentColor" stroke-width="4.200"><path d="M1.500 9Q17 -4.500 32.500 9M7 15.500Q17 6.500 27 15.500"/></g><path d="M11 20Q17 15 23 20L17 26z" fill="currentColor"/></svg>
          <span class="ime">한</span>
          <div class="group">
            <svg width="29" height="27" viewBox="0 0 29 27"><circle cx="11.500" cy="11" r="9" fill="none" stroke="currentColor" stroke-width="3"/><path d="M18 17 25.500 25" stroke="currentColor" stroke-width="3.500" stroke-linecap="round"/></svg>
            <svg width="47" height="28" viewBox="0 0 47 28"><rect x="1.200" y="1.200" width="24.600" height="10.600" rx="5.300" fill="none" stroke="currentColor" stroke-width="2.400"/><circle cx="7" cy="6.500" r="3.500" fill="currentColor"/><rect y="15" width="27" height="13" rx="6.500" fill="currentColor"/><circle cx="20.500" cy="21.500" r="4" fill="#300592"/><circle cx="41" cy="14" r="6" fill="#fba21c"/></svg>
            <span class="siri"></span>
            <span class="clock">5월 1일 (수) 02:10</span>
          </div>
        </div>
      </header>`;
  }

  private renderStrip() {
    return html`
      <div class="strip">
        <div class="lights">
          <button class="red" aria-label="닫기"></button><button class="yellow" aria-label="최소화"></button><button class="green" aria-label="전체 화면"></button>
        </div>
        <div class="tabs">
          ${browserTabs.map((t, i) => html`
            <div class=${classMap({ tab: true, active: i === this.activeTab, before: i === this.activeTab - 1 })}>
              ${i === this.activeTab ? html`<span class="cap"></span>` : ""}
              ${t.icon}
              <button class="title" @click=${() => (this.activeTab = i)}>${t.title}</button>
              <button class="close" aria-label="${t.name} 탭 닫기">${closeIcon}</button>
            </div>`)}
        </div>
        <div class="strip-end">
          <button aria-label="새 탭"><svg width="22" height="22" viewBox="0 0 22 22"><path d="M11 1v20M1 11h20" stroke="currentColor" stroke-width="2.500"/></svg></button>
          <button class="more" aria-label="탭 검색"><svg width="20" height="14" viewBox="0 0 20 14"><path d="M2 2l8 8 8-8" fill="none" stroke="#e6e6e6" stroke-width="3"/></svg></button>
        </div>
      </div>`;
  }

  private renderToolbar() {
    return html`
      <div class="toolbar">
        <div class="nav">
          <button class="off" aria-label="뒤로"><svg width="26" height="26" viewBox="0 0 26 26"><path d="M25 13H3M13 2 2 13 13 24" fill="none" stroke="currentColor" stroke-width="2.800"/></svg></button>
          <button class="off" aria-label="앞으로"><svg width="26" height="26" viewBox="0 0 26 26"><path d="M1 13H23M13 2 24 13 13 24" fill="none" stroke="currentColor" stroke-width="2.800"/></svg></button>
          <button aria-label="새로고침"><svg width="28" height="28" viewBox="0 0 28 28"><path d="M25 17A11.500 11.500 0 1 1 22 5.500L25 9" fill="none" stroke="currentColor" stroke-width="2.800"/><path d="M26 1V11H16V8.500H23.500V1z" fill="currentColor"/></svg></button>
        </div>
        <div class="omnibox">
          <button class="info" aria-label="사이트 정보"><svg width="28" height="28" viewBox="0 0 28 28"><circle cx="14" cy="14" r="12" fill="none" stroke="currentColor" stroke-width="2.800"/><path d="M14 12.500v8M14 7.500v3" stroke="currentColor" stroke-width="2.800"/></svg></button>
          <input class="url" type="text" aria-label="주소창" .value=${"127.0.0.1:5500/Level2/Lec_9~10/detail.html"} />
          <button aria-label="북마크"><svg width="34" height="34" viewBox="0 0 34 34"><path d="M17 4.500 20.500 13.500 30.500 14.200 22.800 20.500 25.300 30 17 24.700 8.700 30 11.200 20.500 3.500 14.200 13.500 13.500z" fill="none" stroke="currentColor" stroke-width="2.800"/></svg></button>
        </div>
        <div class="ext">
          <button class="offext" aria-label="확장 프로그램 꺼짐"><svg width="30" height="10" viewBox="0 0 30 10"><path d="M3 5 12 1 24 3 20 6 30 9 4 10 13 5z" fill="#050505"/></svg><span class="offtag">Off</span></button>
          <button aria-label="확장 프로그램"><svg width="34" height="34" viewBox="0 0 34 34"><path d="M3 6H12C12 0 20 0 20 6H28V14C34 14 34 22 28 22V32H3V23C9 22 9 15 3 14z" fill="none" stroke="currentColor" stroke-width="3.200" stroke-linejoin="round"/></svg></button>
          <span class="rule"></span>
          <button class="avatar">현석</button>
          <button aria-label="더보기"><svg width="8" height="30" viewBox="0 0 8 30"><g fill="currentColor"><circle cx="4" cy="4" r="3"/><circle cx="4" cy="15" r="3"/><circle cx="4" cy="26" r="3"/></g></svg></button>
        </div>
      </div>`;
  }

  render() {
    return html`
      <div class="desktop">
        ${this.renderMenuBar()}
        <div class="window">
          ${this.renderStrip()} ${this.renderToolbar()}
          <main class="page">
            <div class="container">
              <div class="pagetabs" role="tablist">
                ${panels.map((p, i) => html`<button role="tab" aria-selected=${i === this.panel ? "true" : "false"} class=${classMap({ on: i === this.panel })} @click=${() => (this.panel = i)}>${p.name}</button>`)}
              </div>
              <p class="panel">${panels[this.panel].body}</p>
            </div>
          </main>
        </div>
        <footer class="dock">
          ${apps.map((a) => html`
            <button class="item" aria-label=${a.label}>
              <span class="tile ${a.id}"><svg viewBox="0 0 73 73">${a.art}</svg></span>
              ${a.running ? html`<span class="dot"></span>` : ""}
            </button>`)}
          <span class="divider"></span>
          ${minis.map((m) => html`<button class="item mini" aria-label=${m.label}><svg viewBox="0 0 93 85">${m.art}</svg></button>`)}
        </footer>
        <svg class="pointer" width="30" height="48" viewBox="0 0 30 48"><path d="M2 3V37L9 31 15 45 22 42 16 29 26 28z" fill="#000" stroke="#fff" stroke-width="2.500"/></svg>
      </div>`;
  }
}
